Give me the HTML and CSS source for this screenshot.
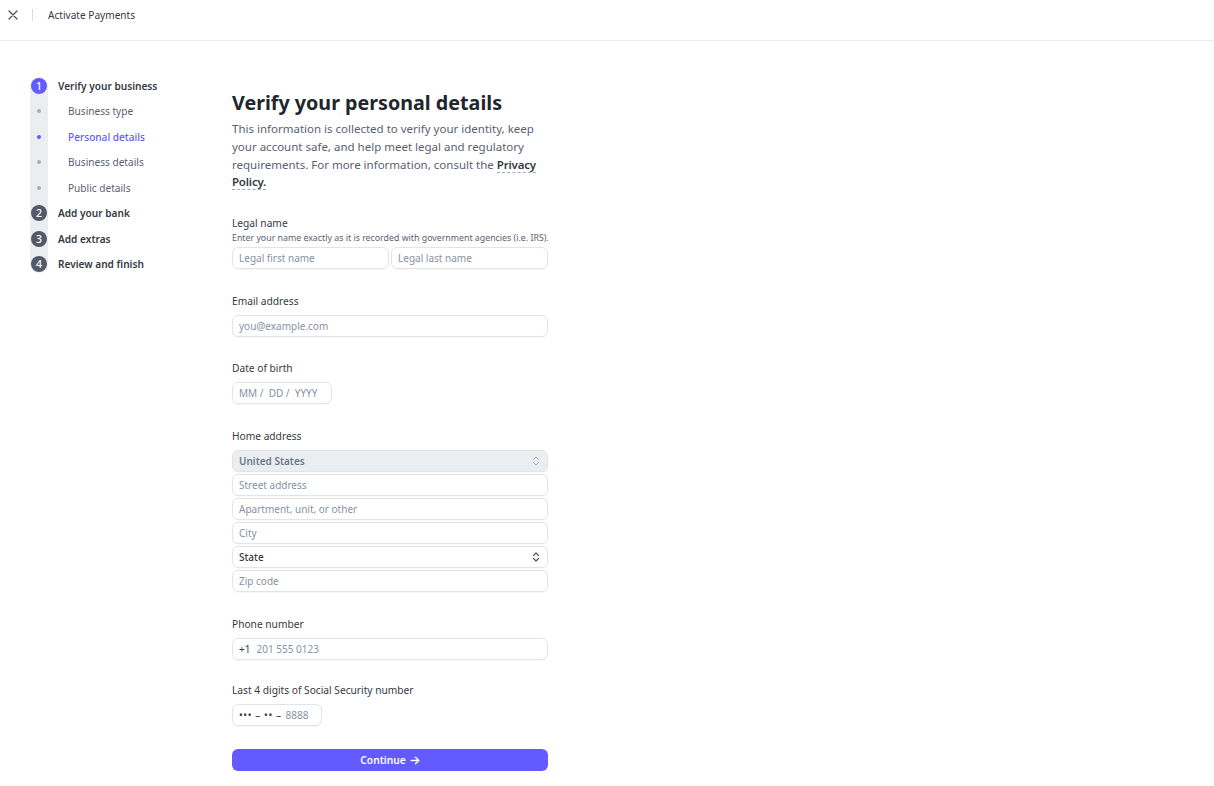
FILE: index.html
```html
<!DOCTYPE html>
<html>
<head>
    <meta charset="utf-8">
    <title>Activate Payments</title>
    <link rel="stylesheet" href="styles.css">
</head>
<body>
    <div class="topbar">
        <button class="close" aria-label="Close">
            <svg width="10" height="10" viewBox="0 0 10 10"><path d="M1 1L9 9M9 1L1 9" stroke="#474e5a" stroke-width="1.2" stroke-linecap="round"/></svg>
        </button>
        <span class="divider"></span>
        <span class="title">Activate Payments</span>
    </div>

    <div class="page">
        <nav class="sidebar">
            <ul class="steps">
                <li class="step current"><span class="marker"><span class="num">1</span></span>Verify your business</li>
                <li class="sub"><span class="marker"><span class="dot"></span></span>Business type</li>
                <li class="sub active"><span class="marker"><span class="dot"></span></span>Personal details</li>
                <li class="sub"><span class="marker"><span class="dot"></span></span>Business details</li>
                <li class="sub"><span class="marker"><span class="dot"></span></span>Public details</li>
                <li class="step"><span class="marker"><span class="num">2</span></span>Add your bank</li>
                <li class="step"><span class="marker"><span class="num">3</span></span>Add extras</li>
                <li class="step"><span class="marker"><span class="num">4</span></span>Review and finish</li>
            </ul>
        </nav>

        <main class="content">
            <h1>Verify your personal details</h1>
            <p class="intro">This information is collected to verify your identity, keep your account safe, and help meet legal and regulatory requirements. For more information, consult the <a href="#">Privacy Policy.</a></p>

            <div class="field first">
                <label>Legal name</label>
                <div class="hint">Enter your name exactly as it is recorded with government agencies (i.e. IRS).</div>
                <div class="row">
                    <div class="input"><span class="ph">Legal first name</span></div>
                    <div class="input"><span class="ph">Legal last name</span></div>
                </div>
            </div>

            <div class="field email">
                <label>Email address</label>
                <div class="input"><span class="ph">you@example.com</span></div>
            </div>

            <div class="field">
                <label>Date of birth</label>
                <div class="input dob"><span class="ph">MM / &nbsp;DD / &nbsp;YYYY</span></div>
            </div>

            <div class="field wide">
                <label>Home address</label>
                <div class="stack">
                    <div class="input select disabled"><span>United States</span><svg class="chev" width="8" height="10" viewBox="0 0 8 10"><path d="M1.5 3.5L4 1L6.5 3.5M1.5 6.5L4 9L6.5 6.5" fill="none" stroke="currentColor" stroke-width="1" stroke-linecap="round" stroke-linejoin="round"/></svg></div>
                    <div class="input"><span class="ph">Street address</span></div>
                    <div class="input"><span class="ph">Apartment, unit, or other</span></div>
                    <div class="input"><span class="ph">City</span></div>
                    <div class="input select"><span>State</span><svg class="chev" width="8" height="10" viewBox="0 0 8 10"><path d="M1.5 3.5L4 1L6.5 3.5M1.5 6.5L4 9L6.5 6.5" fill="none" stroke="currentColor" stroke-width="1.2" stroke-linecap="round" stroke-linejoin="round"/></svg></div>
                    <div class="input"><span class="ph">Zip code</span></div>
                </div>
            </div>

            <div class="field wide">
                <label>Phone number</label>
                <div class="input"><span class="prefix">+1</span><span class="ph">201 555 0123</span></div>
            </div>

            <div class="field tight">
                <label>Last 4 digits of Social Security number</label>
                <div class="input ssn"><span class="prefix mask">&bull;&bull;&bull; &ndash; &bull;&bull; &ndash;</span><span class="ph">8888</span></div>
            </div>

            <button class="continue">Continue <svg width="10" height="9" viewBox="0 0 10 9"><path d="M1 4.5H8.5M5.5 1.2L8.8 4.5L5.5 7.8" fill="none" stroke="#fff" stroke-width="1.3" stroke-linecap="round" stroke-linejoin="round"/></svg></button>
        </main>
    </div>
</body>
</html>
```

FILE: styles.css
```css
body {
    font-family: 'Noto Sans', 'Open Sans', sans-serif;
    margin: 0;
    background-color: #ffffff;
    color: #353a44;
}

.topbar {
    height: 40px;
    border-bottom: 1px solid #ebeef1;
    display: flex;
    align-items: center;
}

.close {
    background: none;
    border: none;
    padding: 0;
    margin-left: 7px;
    width: 12px;
    height: 12px;
    display: flex;
    align-items: center;
    justify-content: center;
    margin-top: -11px;
}

.divider {
    width: 1px;
    height: 12px;
    background-color: #d8dde3;
    margin-left: 13px;
    margin-top: -11px;
}

.title {
    font-size: 10.1px;
    margin-left: 15px;
    margin-top: -11px;
    color: #353a44;
}

.page {
    display: flex;
    padding: 32px 0 0 30px;
}

.sidebar {
    width: 202px;
    flex-shrink: 0;
}

.steps {
    list-style: none;
    margin: 0;
    padding: 0;
    position: relative;
}

.steps::before {
    content: '';
    position: absolute;
    left: 0;
    top: 4px;
    bottom: 4px;
    width: 18px;
    border-radius: 9px;
    background-color: #ebeef1;
}

.steps li {
    height: 25.5px;
    display: flex;
    align-items: center;
    font-size: 10.1px;
    position: relative;
}

.marker {
    width: 18px;
    height: 100%;
    display: flex;
    align-items: center;
    justify-content: center;
    flex-shrink: 0;
}

.num {
    width: 16px;
    height: 16px;
    border-radius: 50%;
    background-color: #545969;
    color: #fff;
    font-size: 10.5px;
    line-height: 16px;
    text-align: center;
    font-weight: 500;
}

.step {
    font-weight: 600;
    color: #353a44;
}

.step .marker {
    margin-right: 10px;
}

.step.current .num {
    background-color: #635bff;
}

.sub {
    color: #596171;
}

.sub .marker {
    margin-right: 20px;
}

.dot {
    width: 4px;
    height: 4px;
    border-radius: 50%;
    background-color: #a3acb9;
}

.sub.active {
    color: #635bff;
    font-weight: 500;
}

.sub.active .dot {
    background-color: #635bff;
}

.content {
    width: 316px;
}

.content h1 {
    font-size: 19.7px;
    line-height: 26px;
    font-weight: 700;
    margin: 17px 0 4px 0;
    color: #21252c;
}

.intro {
    font-size: 11.5px;
    line-height: 17.8px;
    color: #596171;
    margin: 0;
}

.intro a {
    color: #353a44;
    font-weight: 600;
    letter-spacing: -0.2px;
    text-decoration: none;
    border-bottom: 1px dashed #a3acb9;
}

.field {
    margin-top: 23px;
}

.field.first {
    margin-top: 24px;
}

.field.email,
.field.wide {
    margin-top: 24px;
}

.field.tight {
    margin-top: 22px;
}

.field label {
    display: block;
    font-size: 10.2px;
    line-height: 16px;
    margin-bottom: 6px;
    color: #353a44;
}

.field.first label {
    margin-bottom: 0;
}

.hint {
    font-size: 8.8px;
    line-height: 12px;
    color: #596171;
    margin: 1px 0 3px 0;
    white-space: nowrap;
}

.row {
    display: flex;
    gap: 2px;
}

.row .input {
    flex: 1;
}

.stack {
    display: flex;
    flex-direction: column;
    gap: 2px;
}

.input {
    box-sizing: border-box;
    height: 22px;
    border: 1px solid #e1e5ea;
    border-radius: 6px;
    padding: 0 6px;
    font-size: 10px;
    display: flex;
    align-items: center;
    color: #353a44;
    box-shadow: 0 1px 1px rgba(0, 0, 0, 0.03);
}

.ph {
    color: #8792a2;
    white-space: pre;
}

.dob {
    width: 100px;
}

.ssn {
    width: 90px;
}

.prefix {
    margin-right: 6px;
    color: #353a44;
}

.mask {
    font-size: 10px;
    letter-spacing: 0.6px;
    margin-right: 4px;
}

.select {
    justify-content: space-between;
    font-weight: 500;
    padding-right: 7px;
}

.select .chev {
    color: #545969;
}

.select.disabled {
    background-color: #ebeef1;
    color: #6c7688;
    font-weight: 600;
}

.select.disabled .chev {
    color: #a3acb9;
}

.continue {
    margin-top: 23px;
    width: 100%;
    height: 22px;
    border: none;
    border-radius: 6px;
    background-color: #635bff;
    color: #fff;
    font-family: inherit;
    font-size: 10.2px;
    font-weight: 600;
    display: flex;
    align-items: center;
    justify-content: center;
    gap: 4px;
    cursor: pointer;
}
```
